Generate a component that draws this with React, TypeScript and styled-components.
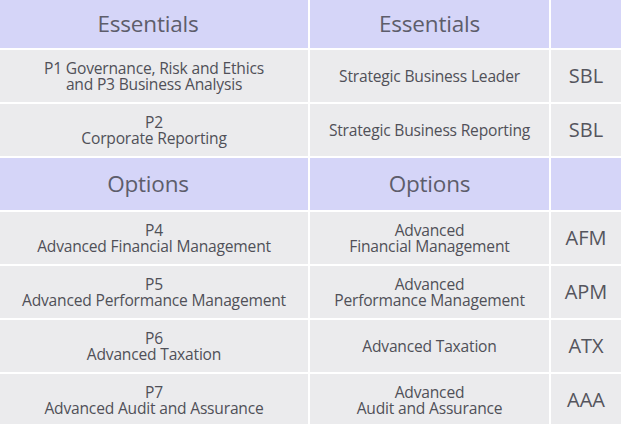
import React from "react";
import styled, { createGlobalStyle } from "styled-components";

const Global = createGlobalStyle`
  html, body { margin: 0; padding: 0; background: #ffffff; }
  body { font-family: "Open Sans", "Noto Sans", sans-serif; }
`;

const Table = styled.div`
  display: grid;
  grid-template-columns: 308px 239px 70px;
  grid-template-rows: 48px;
  grid-auto-rows: 52px;
  gap: 2px;
  width: 621px;
  height: 424px;
  overflow: hidden;
  background: #ffffff;
`;

const HeadCell = styled.div<{ $lead?: boolean }>`
  background: #d5d5f8;
  display: flex;
  align-items: center;
  justify-content: center;
  color: #5d5d6b;
  font-size: 22.5px;
  letter-spacing: -0.2px;
  padding-bottom: 2px;
  padding-right: ${(p) => (p.$lead ? "12px" : "0")};
  box-sizing: border-box;
`;

const Cell = styled.div`
  background: #ebebed;
  display: flex;
  flex-direction: column;
  align-items: center;
  justify-content: center;
  color: #505058;
  font-size: 15.6px;
  text-align: center;
  letter-spacing: -0.2px;
`;

const Line = styled.span`
  display: block;
  line-height: 16px;
  white-space: nowrap;
`;

const CodeCell = styled(Cell)`
  font-size: 20px;
  line-height: 24px;
  letter-spacing: 0;
  color: #55555d;
`;

type Row = { left: string[]; mid: string[]; code: string };

const essentials: Row[] = [
  { left: ["P1 Governance, Risk and Ethics", "and P3 Business Analysis"], mid: ["Strategic Business Leader"], code: "SBL" },
  { left: ["P2", "Corporate Reporting"], mid: ["Strategic Business Reporting"], code: "SBL" },
];

const options: Row[] = [
  { left: ["P4", "Advanced Financial Management"], mid: ["Advanced", "Financial Management"], code: "AFM" },
  { left: ["P5", "Advanced Performance Management"], mid: ["Advanced", "Performance Management"], code: "APM" },
  { left: ["P6", "Advanced Taxation"], mid: ["Advanced Taxation"], code: "ATX" },
  { left: ["P7", "Advanced Audit and Assurance"], mid: ["Advanced", "Audit and Assurance"], code: "AAA" },
];

const Lines = ({ lines }: { lines: string[] }) => (
  <>
    {lines.map((l, i) => (
      <Line key={i}>{l}</Line>
    ))}
  </>
);

const renderRows = (rows: Row[]) =>
  rows.map((r, i) => (
    <React.Fragment key={i}>
      <Cell>
        <Lines lines={r.left} />
      </Cell>
      <Cell>
        <Lines lines={r.mid} />
      </Cell>
      <CodeCell>{r.code}</CodeCell>
    </React.Fragment>
  ));

export default function App() {
  return (
    <>
      <Global />
      <Table>
        <HeadCell $lead>Essentials</HeadCell>
        <HeadCell>Essentials</HeadCell>
        <HeadCell />
        {renderRows(essentials)}
        <HeadCell $lead>Options</HeadCell>
        <HeadCell>Options</HeadCell>
        <HeadCell />
        {renderRows(options)}
      </Table>
    </>
  );
}
